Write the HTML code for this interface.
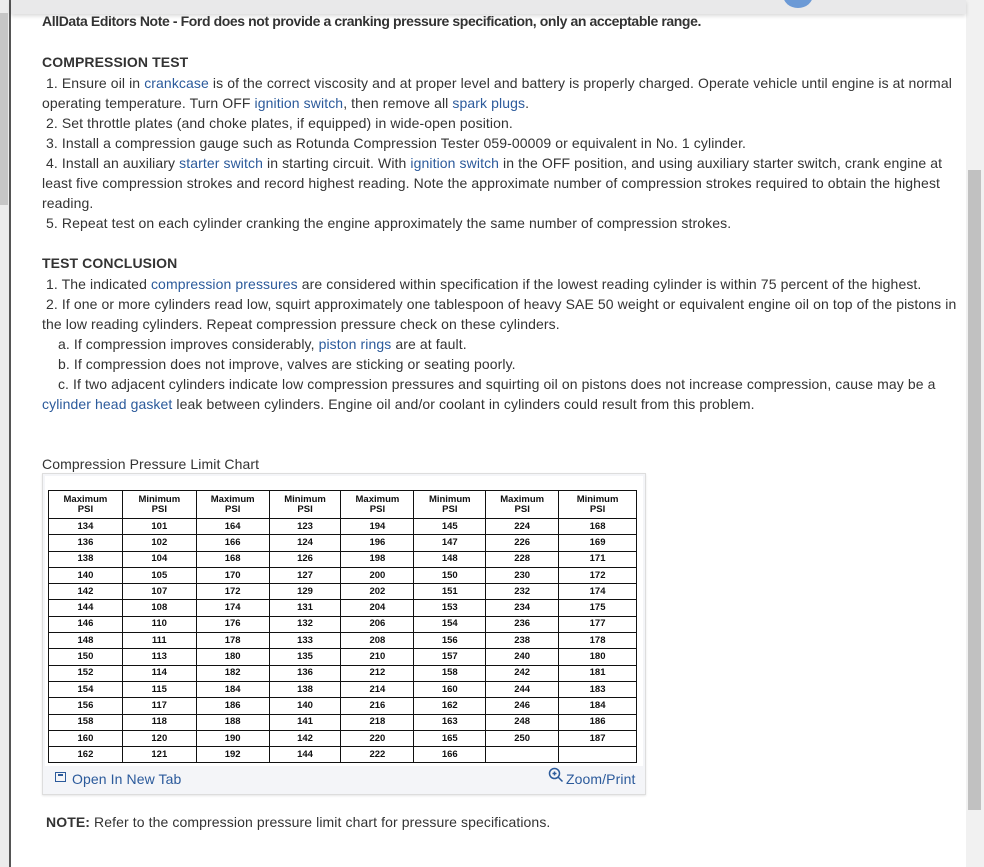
<!DOCTYPE html>
<html><head><meta charset="utf-8"><style>
*{margin:0;padding:0;box-sizing:border-box}
body{width:984px;height:867px;overflow:hidden;background:#fff;font-family:"Liberation Sans",Arial,sans-serif;color:#333;position:relative}
.l{position:absolute;left:42px;white-space:nowrap;font-size:14px;letter-spacing:0.1px;line-height:20px}
a{color:#2b5a9b;text-decoration:none}
b{font-weight:bold}
.tbl{position:absolute;left:48px;top:490px;border-collapse:collapse;font-family:"Liberation Sans",Arial,sans-serif;font-size:9.5px;font-weight:bold;color:#111}
.tbl td{border:1.5px solid #111;text-align:center;height:16.3px;padding:0;line-height:14px}
.tbl tr.h td{height:28px;line-height:10px}
</style></head><body>
<div style="position:absolute;left:0;top:0;width:9px;height:867px;background:#ececec"></div>
<div style="position:absolute;left:0;top:13px;width:8px;height:192px;background:#c6c6c6"></div>
<div style="position:absolute;left:9px;top:0;width:2px;height:867px;background:#555"></div>
<div style="position:absolute;left:966px;top:0;width:18px;height:867px;background:#f1f1f1"></div>
<div style="position:absolute;left:968px;top:170px;width:13px;height:640px;background:#c1c1c1"></div>
<div style="position:absolute;left:11px;top:0;width:955px;height:14px;background:#e9e9ea;box-shadow:0 2px 4px rgba(0,0,0,.15)"></div>
<div style="position:absolute;left:783px;top:-18px;width:30px;height:26px;border-radius:50%;background:#6c9ad6"></div>

<div class="l" style="top:11px;font-weight:bold;letter-spacing:-0.4px">AllData Editors Note - Ford does not provide a cranking pressure specification, only an acceptable range.</div>
<div class="l" style="top:52px;font-weight:bold">COMPRESSION TEST</div>
<div class="l" style="top:73px">&nbsp;1. Ensure oil in <a>crankcase</a> is of the correct viscosity and at proper level and battery is properly charged. Operate vehicle until engine is at normal</div>
<div class="l" style="top:93px">operating temperature. Turn OFF <a>ignition switch</a>, then remove all <a>spark plugs</a>.</div>
<div class="l" style="top:113px">&nbsp;2. Set throttle plates (and choke plates, if equipped) in wide-open position.</div>
<div class="l" style="top:133px">&nbsp;3. Install a compression gauge such as Rotunda Compression Tester 059-00009 or equivalent in No. 1 cylinder.</div>
<div class="l" style="top:153px">&nbsp;4. Install an auxiliary <a>starter switch</a> in starting circuit. With <a>ignition switch</a> in the OFF position, and using auxiliary starter switch, crank engine at</div>
<div class="l" style="top:173px">least five compression strokes and record highest reading. Note the approximate number of compression strokes required to obtain the highest</div>
<div class="l" style="top:193px">reading.</div>
<div class="l" style="top:213px">&nbsp;5. Repeat test on each cylinder cranking the engine approximately the same number of compression strokes.</div>
<div class="l" style="top:253px;font-weight:bold">TEST CONCLUSION</div>
<div class="l" style="top:274px">&nbsp;1. The indicated <a>compression pressures</a> are considered within specification if the lowest reading cylinder is within 75 percent of the highest.</div>
<div class="l" style="top:294px">&nbsp;2. If one or more cylinders read low, squirt approximately one tablespoon of heavy SAE 50 weight or equivalent engine oil on top of the pistons in</div>
<div class="l" style="top:314px">the low reading cylinders. Repeat compression pressure check on these cylinders.</div>
<div class="l" style="top:334px">&nbsp;&nbsp;&nbsp;&nbsp;a. If compression improves considerably, <a>piston rings</a> are at fault.</div>
<div class="l" style="top:354px">&nbsp;&nbsp;&nbsp;&nbsp;b. If compression does not improve, valves are sticking or seating poorly.</div>
<div class="l" style="top:374px">&nbsp;&nbsp;&nbsp;&nbsp;c. If two adjacent cylinders indicate low compression pressures and squirting oil on pistons does not increase compression, cause may be a</div>
<div class="l" style="top:394px"><a>cylinder head gasket</a> leak between cylinders. Engine oil and/or coolant in cylinders could result from this problem.</div>
<div class="l" style="top:454px">Compression Pressure Limit Chart</div>

<div style="position:absolute;left:42px;top:473px;width:604px;height:322px;border:1px solid #ddd;background:#f4f5f8;box-shadow:0 1px 2px rgba(0,0,0,.1)"></div>
<div style="position:absolute;left:45px;top:476px;width:598px;height:290px;background:#fff"></div>
<table class="tbl" style="width:589px">
<colgroup><col style="width:74px"><col style="width:74px"><col style="width:73px"><col style="width:72px"><col style="width:73px"><col style="width:72px"><col style="width:73px"><col style="width:78px"></colgroup>
<tr class="h"><td>Maximum<br>PSI</td><td>Minimum<br>PSI</td><td>Maximum<br>PSI</td><td>Minimum<br>PSI</td><td>Maximum<br>PSI</td><td>Minimum<br>PSI</td><td>Maximum<br>PSI</td><td>Minimum<br>PSI</td></tr>
<tr><td>134</td><td>101</td><td>164</td><td>123</td><td>194</td><td>145</td><td>224</td><td>168</td></tr>
<tr><td>136</td><td>102</td><td>166</td><td>124</td><td>196</td><td>147</td><td>226</td><td>169</td></tr>
<tr><td>138</td><td>104</td><td>168</td><td>126</td><td>198</td><td>148</td><td>228</td><td>171</td></tr>
<tr><td>140</td><td>105</td><td>170</td><td>127</td><td>200</td><td>150</td><td>230</td><td>172</td></tr>
<tr><td>142</td><td>107</td><td>172</td><td>129</td><td>202</td><td>151</td><td>232</td><td>174</td></tr>
<tr><td>144</td><td>108</td><td>174</td><td>131</td><td>204</td><td>153</td><td>234</td><td>175</td></tr>
<tr><td>146</td><td>110</td><td>176</td><td>132</td><td>206</td><td>154</td><td>236</td><td>177</td></tr>
<tr><td>148</td><td>111</td><td>178</td><td>133</td><td>208</td><td>156</td><td>238</td><td>178</td></tr>
<tr><td>150</td><td>113</td><td>180</td><td>135</td><td>210</td><td>157</td><td>240</td><td>180</td></tr>
<tr><td>152</td><td>114</td><td>182</td><td>136</td><td>212</td><td>158</td><td>242</td><td>181</td></tr>
<tr><td>154</td><td>115</td><td>184</td><td>138</td><td>214</td><td>160</td><td>244</td><td>183</td></tr>
<tr><td>156</td><td>117</td><td>186</td><td>140</td><td>216</td><td>162</td><td>246</td><td>184</td></tr>
<tr><td>158</td><td>118</td><td>188</td><td>141</td><td>218</td><td>163</td><td>248</td><td>186</td></tr>
<tr><td>160</td><td>120</td><td>190</td><td>142</td><td>220</td><td>165</td><td>250</td><td>187</td></tr>
<tr><td>162</td><td>121</td><td>192</td><td>144</td><td>222</td><td>166</td><td></td><td></td></tr>
</table>
<div style="position:absolute;left:55px;top:772px;width:11px;height:10px;border:1.5px solid #2b5a9b"></div>
<div style="position:absolute;left:58px;top:774px;width:5px;height:2px;background:#2b5a9b"></div>
<div class="l" style="left:72px;top:769px;color:#2b5a9b">Open In New Tab</div>
<svg style="position:absolute;left:548px;top:767px" width="16" height="16" viewBox="0 0 16 16"><circle cx="6.5" cy="6.5" r="5" fill="none" stroke="#2b5a9b" stroke-width="1.5"/><path d="M10 10L14.5 14.5M4.5 6.5h4M6.5 4.5v4" stroke="#2b5a9b" stroke-width="1.5"/></svg>
<div class="l" style="left:566px;top:769px;color:#2b5a9b">Zoom/Print</div>
<div class="l" style="left:46px;top:812px"><b>NOTE:</b> Refer to the compression pressure limit chart for pressure specifications.</div>
</body></html>
